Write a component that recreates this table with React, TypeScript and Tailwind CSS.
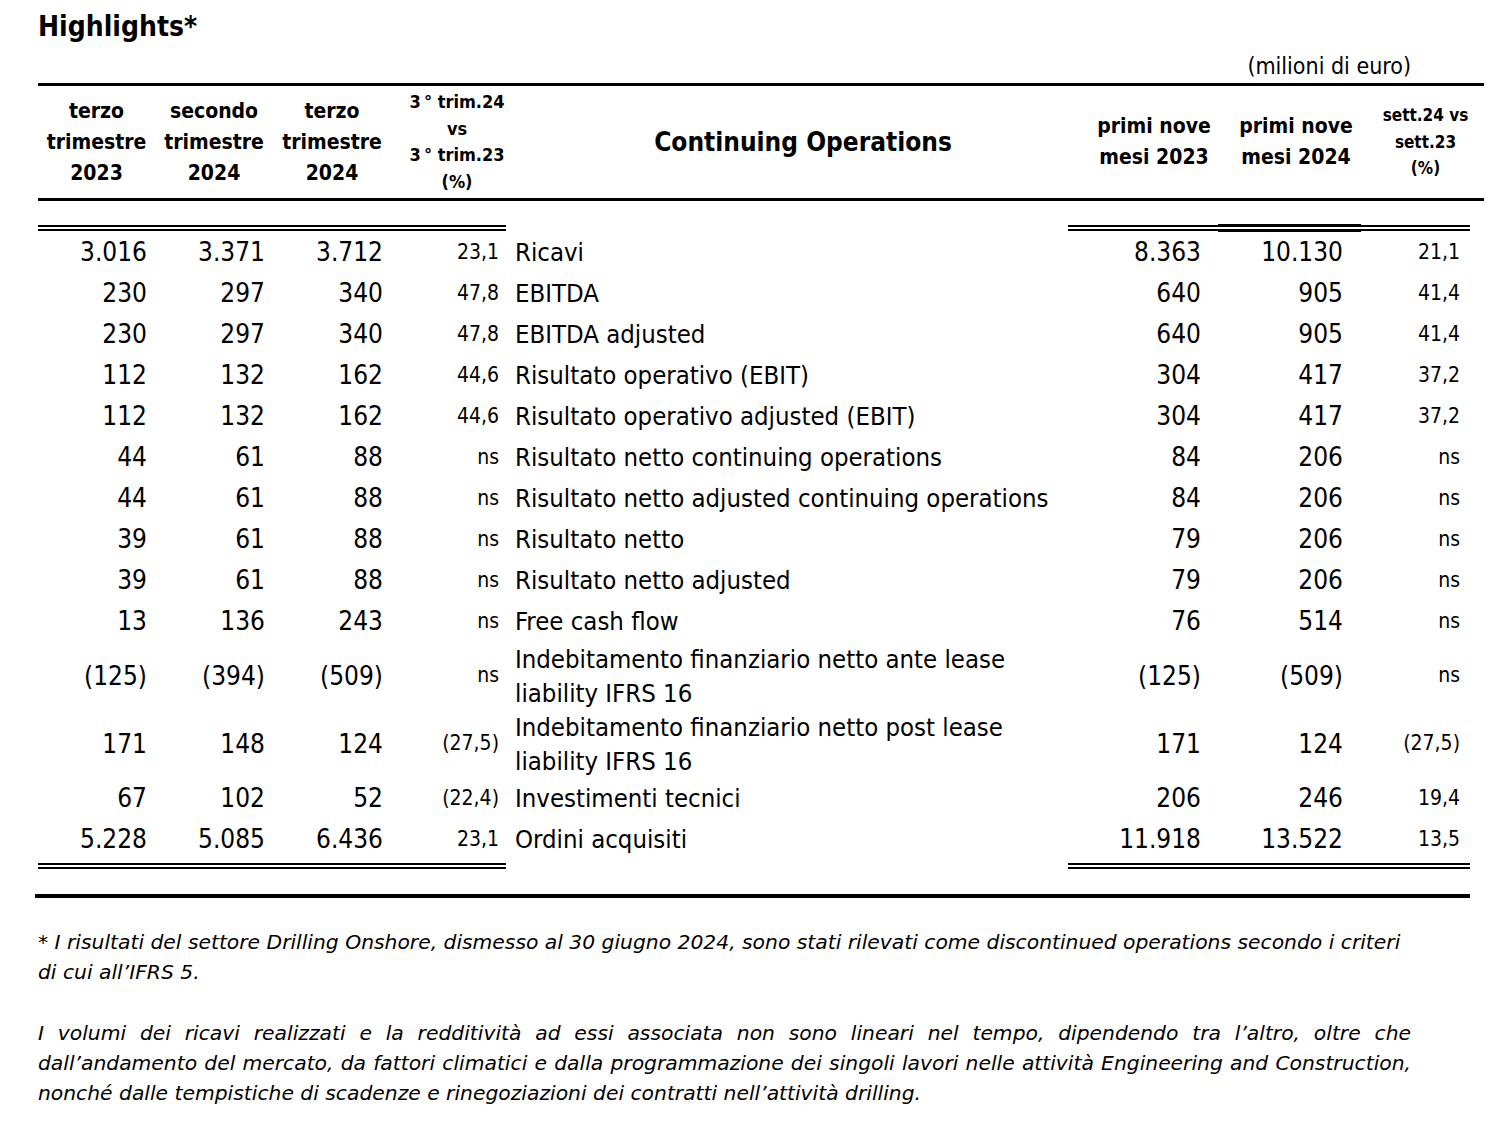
import React from 'react';

type Row = {
  q23: string;
  q2: string;
  q24: string;
  qPct: string;
  label: string[];
  m23: string;
  m24: string;
  mPct: string;
};

const rows: Row[] = [
  { q23: '3.016', q2: '3.371', q24: '3.712', qPct: '23,1', label: ['Ricavi'], m23: '8.363', m24: '10.130', mPct: '21,1' },
  { q23: '230', q2: '297', q24: '340', qPct: '47,8', label: ['EBITDA'], m23: '640', m24: '905', mPct: '41,4' },
  { q23: '230', q2: '297', q24: '340', qPct: '47,8', label: ['EBITDA adjusted'], m23: '640', m24: '905', mPct: '41,4' },
  { q23: '112', q2: '132', q24: '162', qPct: '44,6', label: ['Risultato operativo (EBIT)'], m23: '304', m24: '417', mPct: '37,2' },
  { q23: '112', q2: '132', q24: '162', qPct: '44,6', label: ['Risultato operativo adjusted (EBIT)'], m23: '304', m24: '417', mPct: '37,2' },
  { q23: '44', q2: '61', q24: '88', qPct: 'ns', label: ['Risultato netto continuing operations'], m23: '84', m24: '206', mPct: 'ns' },
  { q23: '44', q2: '61', q24: '88', qPct: 'ns', label: ['Risultato netto adjusted continuing operations'], m23: '84', m24: '206', mPct: 'ns' },
  { q23: '39', q2: '61', q24: '88', qPct: 'ns', label: ['Risultato netto'], m23: '79', m24: '206', mPct: 'ns' },
  { q23: '39', q2: '61', q24: '88', qPct: 'ns', label: ['Risultato netto adjusted'], m23: '79', m24: '206', mPct: 'ns' },
  { q23: '13', q2: '136', q24: '243', qPct: 'ns', label: ['Free cash flow'], m23: '76', m24: '514', mPct: 'ns' },
  {
    q23: '(125)', q2: '(394)', q24: '(509)', qPct: 'ns',
    label: ['Indebitamento finanziario netto ante lease', 'liability IFRS 16'],
    m23: '(125)', m24: '(509)', mPct: 'ns',
  },
  {
    q23: '171', q2: '148', q24: '124', qPct: '(27,5)',
    label: ['Indebitamento finanziario netto post lease', 'liability IFRS 16'],
    m23: '171', m24: '124', mPct: '(27,5)',
  },
  { q23: '67', q2: '102', q24: '52', qPct: '(22,4)', label: ['Investimenti tecnici'], m23: '206', m24: '246', mPct: '19,4' },
  { q23: '5.228', q2: '5.085', q24: '6.436', qPct: '23,1', label: ['Ordini acquisiti'], m23: '11.918', m24: '13.522', mPct: '13,5' },
];

const grid = 'grid grid-cols-[117px_118px_118px_115px_577px_142px_142px_117px]';

const DoubleLine = ({ thick }: { thick?: boolean }) => (
  <div className={thick ? 'border-t-[8px] border-double border-black' : 'border-t-[6px] border-double border-black'} />
);

const BodyRow = ({ r }: { r: Row }) => {
  const tall = r.label.length > 1;
  const h = tall ? 'h-[68px]' : 'h-[41px]';
  const num = `${h} flex items-center justify-end text-[26px]`;
  const pct = `${h} flex items-center justify-end text-[21px]`;
  return (
    <>
      <div className={`${num} pr-2`}>{r.q23}</div>
      <div className={`${num} pr-2`}>{r.q2}</div>
      <div className={`${num} pr-2`}>{r.q24}</div>
      <div className={`${pct} pr-[7px]`}>{r.qPct}</div>
      <div className={`${h} flex flex-col justify-center pl-[9px] text-[25.5px] ${tall ? 'leading-[34px]' : ''}`}>
        {r.label.map((l) => (
          <div key={l} className="whitespace-nowrap">{l}</div>
        ))}
      </div>
      <div className={`${num} pr-6`}>{r.m23}</div>
      <div className={`${num} pr-6`}>{r.m24}</div>
      <div className={`${pct} pr-6`}>{r.mPct}</div>
    </>
  );
};

export default function App() {
  return (
    <div className="min-h-[1128px] w-[1500px] bg-white text-black font-['DejaVu_Sans_Condensed','DejaVu_Sans',sans-serif] [font-stretch:condensed]">
      <div className="pl-[38px] pt-[8px]">
        <h1 className="text-[28px] font-bold leading-[38px]">Highlights*</h1>

        <div className="w-[1446px]">
          <div className="flex justify-end pr-[73px] pt-[7px] text-[23px] leading-[26px]">(milioni di euro)</div>

          <div className="mt-[4px] border-t-[3px] border-black" />

          <div className={`${grid} h-[112px] items-center text-center font-bold`}>
            <div className="text-[21px] leading-[31px]">terzo<br />trimestre<br />2023</div>
            <div className="text-[21px] leading-[31px]">secondo<br />trimestre<br />2024</div>
            <div className="text-[21px] leading-[31px]">terzo<br />trimestre<br />2024</div>
            <div className="pl-[17px] text-[18px] leading-[26.5px]">3&thinsp;°&nbsp;trim.24<br />vs<br />3&thinsp;°&nbsp;trim.23<br />(%)</div>
            <div className="pl-[17px] text-[26px]">Continuing Operations</div>
            <div className="text-[21px] leading-[31px]">primi nove<br />mesi 2023</div>
            <div className="text-[21px] leading-[31px]">primi nove<br />mesi 2024</div>
            <div className="text-[17px] leading-[26.5px]">sett.24 vs<br />sett.23<br />(%)</div>
          </div>

          <div className="border-t-[3px] border-black" />

          <div className={`${grid} mt-[24px]`}>
            <div className="col-span-4"><DoubleLine /></div>
            <div />
            <div className="col-span-3 -ml-[15px] mr-[14px] flex items-start">
              <div className="w-[150px]"><DoubleLine /></div>
              <div className="w-[143px] -mt-px"><DoubleLine thick /></div>
              <div className="flex-1"><DoubleLine /></div>
            </div>
          </div>

          <div className={grid}>
            {rows.map((r, i) => (
              <BodyRow key={i} r={r} />
            ))}
          </div>

          <div className={`${grid} mt-[3px]`}>
            <div className="col-span-4"><DoubleLine /></div>
            <div />
            <div className="col-span-3 -ml-[15px] mr-[14px]"><DoubleLine /></div>
          </div>

          <div className="-ml-[3px] mr-[14px] mt-[25px] border-t-[4px] border-black" />
        </div>

        <div className="mt-[29px] w-[1373px] italic text-[20.3px] leading-[30px] font-['DejaVu_Sans',sans-serif] [font-stretch:normal]">
          <p className="whitespace-nowrap">
            * I risultati del settore Drilling Onshore, dismesso al 30 giugno 2024, sono stati rilevati come discontinued operations secondo i criteri
            <br />
            di cui all’IFRS 5.
          </p>
          <div className="mt-[31px]">
            <div className="whitespace-nowrap text-justify [text-align-last:justify]">
              I volumi dei ricavi realizzati e la redditività ad essi associata non sono lineari nel tempo, dipendendo tra l’altro, oltre che
            </div>
            <div className="whitespace-nowrap text-justify [text-align-last:justify] [word-spacing:-2px]">
              dall’andamento del mercato, da fattori climatici e dalla programmazione dei singoli lavori nelle attività Engineering and Construction,
            </div>
            <div className="whitespace-nowrap">
              nonché dalle tempistiche di scadenze e rinegoziazioni dei contratti nell’attività drilling.
            </div>
          </div>
        </div>
      </div>
    </div>
  );
}
